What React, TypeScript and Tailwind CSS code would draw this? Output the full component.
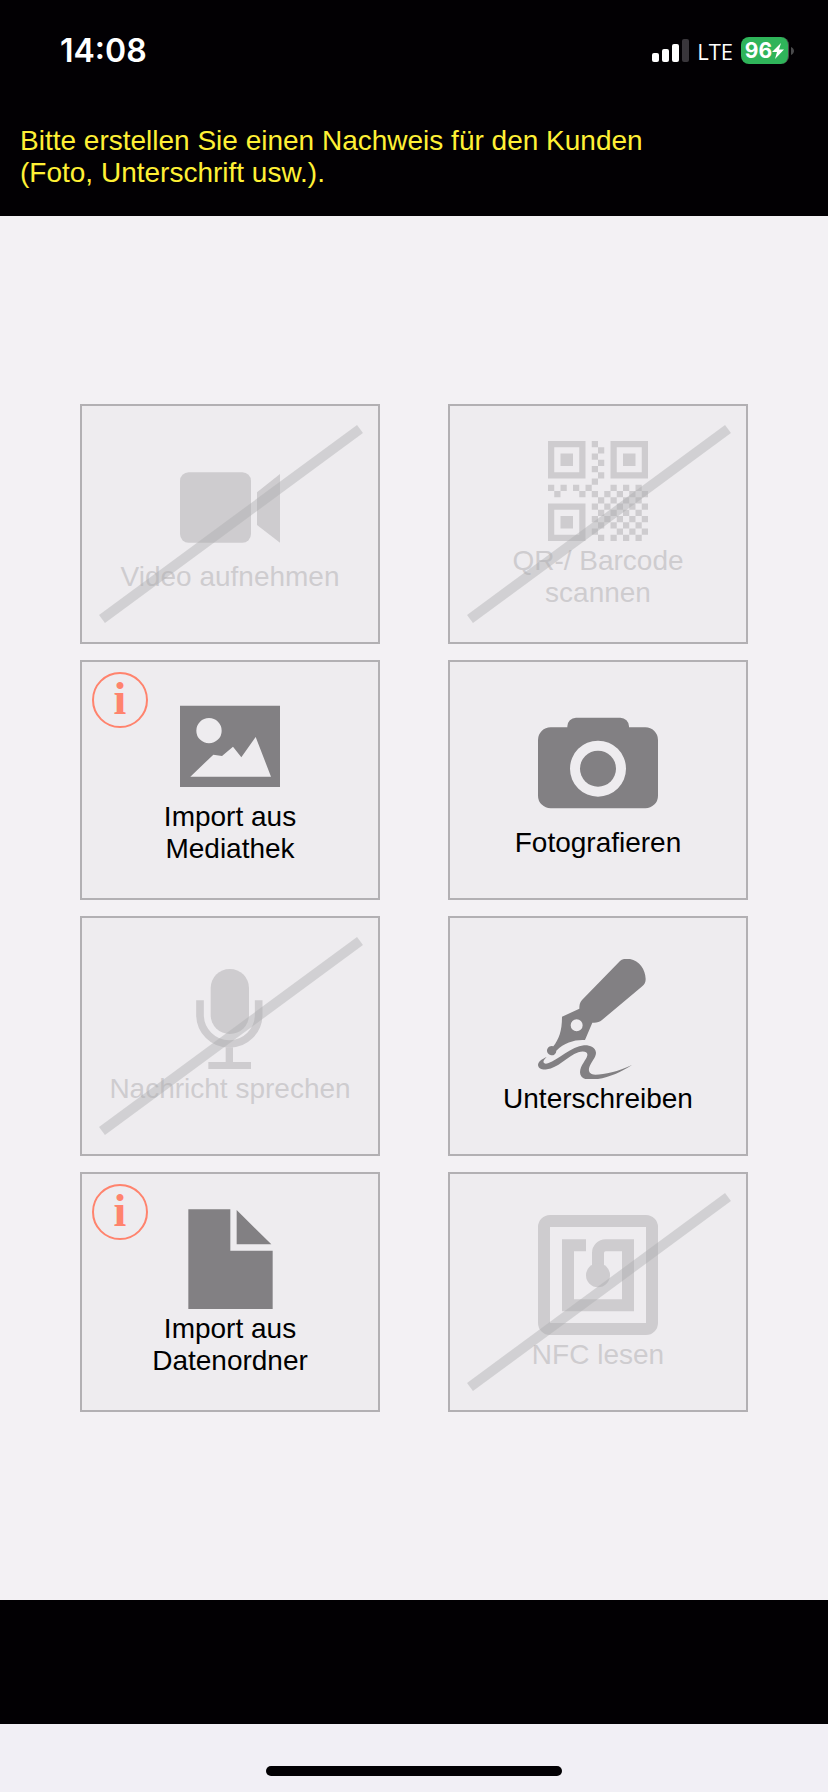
import type { ReactNode } from 'react'
import clsx from 'clsx'

interface TileProps {
  label: string
  icon: ReactNode
  disabled?: boolean
  info?: boolean
}

function VideoIcon() {
  return (
    <svg viewBox="0 0 300 300" className="size-[100px]" fill="currentColor">
      <rect y="46" width="213" height="211" rx="26" />
      <path d="M231 106 300 51v206l-69-53z" />
    </svg>
  )
}

const finders = [
  [0, 0],
  [10, 0],
  [0, 10],
]

const modules = [
  [7], [8], [7], [8], [7], [8], [7],
  [0, 2, 4, 6, 10, 12, 14],
  [1, 5, 7, 9, 11, 13, 15],
  [8, 10, 12, 14],
  [7, 9, 11, 13, 15],
  [8, 10, 12, 14],
  [7, 9, 11, 13, 15],
  [8, 10, 12, 14],
  [7, 11, 13, 15],
  [8, 10, 12, 14],
]

function QrIcon() {
  return (
    <svg viewBox="0 0 16 16" className="size-[100px]" fill="currentColor">
      {finders.map(([x, y]) => (
        <path
          key={`${x}-${y}`}
          transform={`translate(${x} ${y})`}
          fillRule="evenodd"
          d="M0 0h6v6H0zM1 1v4h4V1zM2 2h2v2H2z"
        />
      ))}
      {modules.map((cols, y) =>
        cols.map((x) => <rect key={`${x}-${y}`} x={x} y={y} width="1" height="1" />)
      )}
    </svg>
  )
}

function ImageIcon() {
  return (
    <svg viewBox="0 0 300 300" className="size-[100px]" fill="currentColor">
      <path
        fillRule="evenodd"
        d="M0 26h300v244H0zM87 63a38 38 0 1 0 0 76 38 38 0 1 0 0-76zM31 239h242L227 120l-43 61-25-32-33 28-26-4z"
      />
    </svg>
  )
}

function CameraIcon() {
  return (
    <svg viewBox="0 0 360 360" className="size-[120px]" fill="currentColor">
      <path
        fillRule="evenodd"
        d="M38 73h50v-3a26 26 0 0 1 26-26h133a26 26 0 0 1 26 26v3h49a38 38 0 0 1 38 38v167a38 38 0 0 1-38 38H38a38 38 0 0 1-38-38V111a38 38 0 0 1 38-38zM180 113a84 84 0 1 0 0 168 84 84 0 1 0 0-168z"
      />
      <circle cx="180" cy="197" r="54" />
    </svg>
  )
}

function MicIcon() {
  return (
    <svg viewBox="0 0 300 300" className="size-[100px]" fill="currentColor">
      <rect x="92" width="115" height="195" rx="57" />
      <path d="M60 94v43a88 88 0 0 0 176 0V94" fill="none" stroke="currentColor" strokeWidth="23" />
      <path d="M137 235h22v44h54v22H85v-22h52z" />
    </svg>
  )
}

function PenIcon() {
  return (
    <svg viewBox="0 0 360 360" className="size-[120px]" fill="currentColor">
      <path
        fillRule="evenodd"
        d="M246 6C252 0 262-2 276 0C304 6 322 30 323 60C323 70 320 76 311 83L192 183C184 190 175 192 163 191L141 243C112 241 80 250 55 275A14 14 0 1 1 46 262C62 240 72 218 72 173L124 149C124 138 125 131 132 123zM116 181a18 18 0 1 0 0 36 18 18 0 1 0 0-36z"
      />
      <path d="M26 294C12 300 0 308 0 319C2 330 14 333 27 331C58 329 88 292 121 280C136 275 150 278 148 289C146 302 127 318 126 340C126 355 140 363 158 362C200 361 244 343 282 318C240 338 200 346 172 347C152 346 150 334 155 322C160 308 174 295 174 281C172 265 155 258 138 259C100 262 62 302 30 313C16 317 10 308 26 294z" />
    </svg>
  )
}

function FileIcon() {
  return (
    <svg viewBox="0 0 300 300" className="size-[100px]" fill="currentColor">
      <path d="M25 1h126v124h127v175H25zM170 3l104 103H170z" />
    </svg>
  )
}

function NfcIcon() {
  return (
    <svg viewBox="0 0 360 360" className="size-[120px]" fill="currentColor">
      <path
        fillRule="evenodd"
        d="M36 0h288a36 36 0 0 1 36 36v288a36 36 0 0 1-36 36H36a36 36 0 0 1-36-36V36A36 36 0 0 1 36 0zM36 36v288h288V36z"
      />
      <path
        d="M144 91H90v180h180V91h-67a23 23 0 0 0-23 23v66"
        fill="none"
        stroke="currentColor"
        strokeWidth="36"
      />
      <circle cx="180" cy="181" r="36" />
    </svg>
  )
}

function SignalIcon() {
  return (
    <svg viewBox="0 0 37 23" className="h-[23px] w-[37px]" fill="white">
      <rect y="14" width="7" height="9" rx="2" />
      <rect x="10" y="10" width="7" height="13" rx="2" />
      <rect x="20" y="5" width="7" height="18" rx="2" />
      <rect x="30" width="7" height="23" rx="2" fill="#39363b" />
    </svg>
  )
}

function Battery() {
  return (
    <div className="flex items-center gap-[2px]">
      <div className="flex h-[27px] w-12 items-center justify-center rounded-lg border-r border-[#4a4a4c] bg-[#2fb45a]">
        <span className="font-[Inter,sans-serif] text-[21px] leading-7 font-bold">96</span>
        <svg viewBox="0 0 12 16" className="h-4 w-3" fill="white">
          <path d="M9 0 0 9h5L3 16l9-9.500H7z" />
        </svg>
      </div>
      <svg viewBox="0 0 3 8" className="h-2 w-[3px]" fill="#4a4a4c">
        <path d="M0 0c4 2 4 6 0 8z" />
      </svg>
    </div>
  )
}

function Tile({ label, icon, disabled, info }: TileProps) {
  return (
    <button
      type="button"
      disabled={disabled}
      className={clsx(
        'relative flex min-h-60 flex-col items-center justify-center gap-1 border-2 border-[#b2b0b3] bg-[#eeecef] px-6 pt-0.5',
        disabled ? 'text-[#cecccf]' : 'text-[#828083]'
      )}
    >
      {icon}
      <span className={clsx('text-[28px] leading-8', !disabled && 'text-black')}>{label}</span>
      {info && (
        <span className="absolute top-[10px] left-[10px] flex size-14 justify-center rounded-full border-2 border-[#ff836d] font-['Liberation_Serif',serif] text-[46px] leading-[50px] font-bold text-[#ff836d]">
          i
        </span>
      )}
      {disabled && (
        <svg
          viewBox="0 0 300 240"
          preserveAspectRatio="none"
          className="absolute -top-0.5 -left-0.5 h-60 w-[calc(100%+4px)]"
        >
          <path d="M22 215 280 25" stroke="#aeacb0" strokeOpacity="0.44" strokeWidth="10" />
        </svg>
      )}
    </button>
  )
}

export default function App() {
  return (
    <div className="flex min-h-screen flex-col bg-[#020003] font-['Liberation_Sans',Arial,sans-serif]">
      <header className="px-5 pb-[27px]">
        <div className="flex h-[101px] items-center justify-between pr-[14px] pl-10 text-white">
          <span className="font-[Inter,sans-serif] text-[32px] leading-10 font-semibold">14:08</span>
          <div className="flex items-center gap-2">
            <SignalIcon />
            <span className="font-['Open_Sans',sans-serif] text-[22px] leading-7">LTE</span>
            <Battery />
          </div>
        </div>
        <p className="mt-6 max-w-[680px] text-[28px] leading-8 text-[#fff035]">
          Bitte erstellen Sie einen Nachweis für den Kunden (Foto, Unterschrift usw.).
        </p>
      </header>

      <main className="flex grow flex-col justify-center bg-[#f3f1f4] px-20">
        <div className="grid grid-cols-2 gap-x-17 gap-y-4">
          <Tile label="Video aufnehmen" icon={<VideoIcon />} disabled />
          <Tile label="QR-/ Barcode scannen" icon={<QrIcon />} disabled />
          <Tile label="Import aus Mediathek" icon={<ImageIcon />} info />
          <Tile label="Fotografieren" icon={<CameraIcon />} />
          <Tile label="Nachricht sprechen" icon={<MicIcon />} disabled />
          <Tile label="Unterschreiben" icon={<PenIcon />} />
          <Tile label="Import aus Datenordner" icon={<FileIcon />} info />
          <Tile label="NFC lesen" icon={<NfcIcon />} disabled />
        </div>
      </main>

      <footer className="flex justify-center border-t-[124px] border-[#020003] bg-[#f1eff5] pt-[42px] pb-4">
        <div className="h-[10px] w-[296px] rounded-full bg-[#020003]" />
      </footer>
    </div>
  )
}
